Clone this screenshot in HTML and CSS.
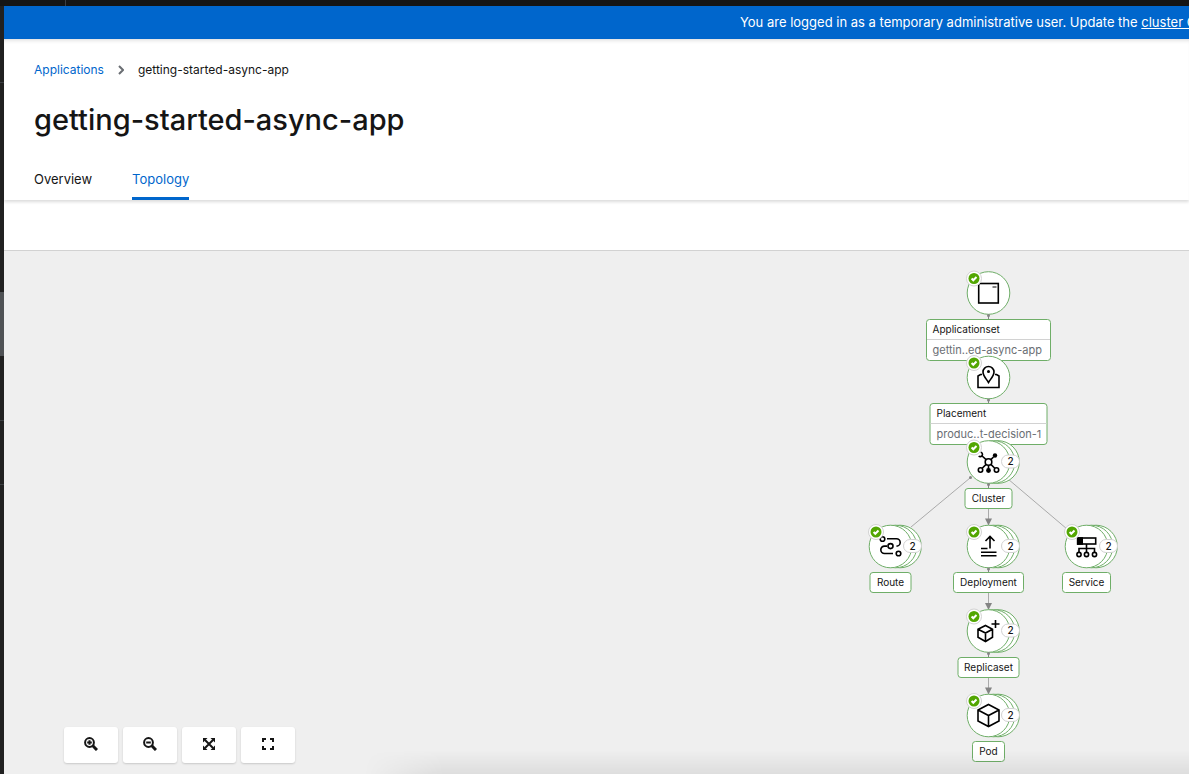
FILE: index.html
```
<!DOCTYPE html>
<html lang="en">
<head>
<meta charset="utf-8">
<title>getting-started-async-app</title>
<link rel="stylesheet" href="styles.css">
</head>
<body>
<header class="masthead"><span class="masthead-toggle"></span></header>
<div class="shell">
  <aside class="sidebar">
    <span class="nav-item nav-first"></span>
    <span class="nav-item nav-group"></span>
    <span class="nav-item nav-current"></span>
    <span class="nav-item"></span>
    <span class="nav-item"></span>
    <span class="nav-item nav-rest"></span>
  </aside>
  <main class="main">
    <div class="banner"><p class="banner-text">You are logged in as a temporary administrative user. Update the <a href="#">cluster OAuth configuration</a></p></div>
    <section class="page-header">
      <nav class="breadcrumb" aria-label="Breadcrumb">
        <a href="#">Applications</a>
        <svg class="chevron" width="6" height="10" viewBox="0 0 6 10" aria-hidden="true"><path d="M1 1l4 4-4 4"/></svg>
        <span>getting-started-async-app</span>
      </nav>
      <h1 class="title">getting-started-async-app</h1>
      <nav class="tabs" aria-label="Views">
        <a class="tab" href="#">Overview</a>
        <a class="tab tab-active" href="#" aria-current="page">Topology</a>
      </nav>
    </section>
    <div class="toolbar"></div>
    <section class="canvas">
      <svg class="graph" role="img" aria-label="Application topology">
        <defs>
          <g id="check"><circle class="badge-ring" r="7.5"/><circle class="badge-fill" r="5.5"/><path class="badge-tick" d="M-2.4 0l1.7 1.8L2.5-1.5"/></g>
          <g id="single"><circle class="disc" r="21.3"/></g>
          <g id="stack"><circle class="disc" cx="9.5" r="21.3"/><circle class="disc" cx="5" r="21.3"/><circle class="disc" r="21.3"/></g>
          <g id="pill"><rect class="pill" x="13" y="-7" width="18" height="13" rx="6.5"/></g>
          <g id="arrow"><path class="arrow" d="M-3.5-6h7L0 1z"/></g>
          <g id="port"><circle class="port" cy="22.500" r="1.500"/><path class="stem" d="M0 22v4"/></g>
        </defs>

        <g class="edges">
          <path d="M966 227L907 276"/>
          <path d="M1004 228L1063 278"/>
          <path d="M984.5 234v39M984.5 318v39M984.5 403v39"/>
        </g>

        <g transform="translate(984.5 42)">
          <use href="#single"/><use href="#port"/>
          <g class="icon"><rect x="-9.8" y="-9.5" width="19.6" height="19.500"/><path class="thin" d="M4-6h4"/></g>
          <use href="#check" x="-14.500" y="-14.5"/>
          <rect class="label" x="-62" y="26.500" width="124" height="41" rx="3"/><path class="rule" d="M-61.500 46.500h123"/>
          <text class="kind" x="-56" y="40">Applicationset</text>
          <text class="name" x="-56" y="61">gettin..ed-async-app</text>
        </g>

        <g transform="translate(984.5 126.500)">
          <use href="#single"/><use href="#port"/>
          <g class="icon"><path d="M0 5C-2 1.500-5.500-1.500-5.500-5.500a5.500 5.500 0 0 1 11 0C5.500-1.500 2 1.500 0 5z"/><circle class="dot" cy="-6" r="1.500"/><path d="M-6.500-3h-1.500l-2.500 1.500V10h21V-1.500L8-3H6.500"/></g>
          <use href="#check" x="-14.500" y="-14.500"/>
          <rect class="label" x="-58.500" y="26" width="117" height="41" rx="3"/><path class="rule" d="M-58 46h116"/>
          <text class="kind" x="-52" y="39">Placement</text>
          <text class="name" x="-52" y="60">produc..t-decision-1</text>
        </g>

        <g transform="translate(984.5 211)">
          <use href="#stack"/><use href="#port"/><circle class="port" cx="-18" cy="15.500" r="1.500"/>
          <g class="icon"><circle r="3.300"/><path d="M-9.800-6a2.200 2.200 0 1 0 2-3.700"/><circle class="dot" cx="6.500" cy="-6.500" r="2.200"/><circle cx="-8" cy="8" r="2.200"/><circle cx="8" cy="8" r="2.200"/><circle class="dot" cy="8.500" r="2.400"/><path d="M-6.400-6l4 3.600M5-5L2.400-2.400M-6.300 6.200l3.900-3.800M6.300 6.200L2.400 2.400M0 3.300v4"/></g>
          <use href="#pill"/><text class="count" x="22" y="3">2</text><use href="#check" x="-14.500" y="-14.500"/>
          <rect class="label" x="-23.500" y="26.500" width="47" height="20" rx="3"/><text class="caption" x="0" y="40">Cluster</text>
        </g>

        <g transform="translate(886.5 295.500)">
          <use href="#stack"/>
          <g class="icon"><circle cx="-8" cy="-7.500" r="2.300"/><path d="M-3.500-7.800H6a3.700 3.700 0 0 1 0 7.400M-3.500-.4H-6a3.700 3.700 0 0 0 0 7.400h8.500"/><circle cx="0" cy="-.4" r="2.500"/><circle cx="8" cy="7" r="2.300"/></g>
          <use href="#pill"/><text class="count" x="22" y="3">2</text><use href="#check" x="-14.500" y="-14.500"/>
          <rect class="label" x="-20.500" y="26" width="41" height="20" rx="3"/><text class="caption" x="0" y="39">Route</text>
        </g>

        <g transform="translate(984.5 295.500)">
          <use href="#arrow" y="-22"/><use href="#stack"/><use href="#port"/>
          <g class="icon"><path d="M1.500 2V-10M-3-5.500l4.500-4.500L6-5.500M-7.500 2h6.500M-7.500 5.800H8M-7.500 9.200H8"/></g>
          <use href="#pill"/><text class="count" x="22" y="3">2</text><use href="#check" x="-14.500" y="-14.500"/>
          <rect class="label" x="-35" y="26" width="70" height="20" rx="3"/><text class="caption" x="0" y="39">Deployment</text>
        </g>

        <g transform="translate(1082.5 295.500)">
          <use href="#stack"/>
          <g class="icon"><rect x="-8.800" y="-8.500" width="18" height="6"/><rect class="solid" x="-8.800" y="-8.500" width="4.500" height="6"/><path d="M0-2.500V6M-7.500 6V2H8v4"/><circle cx="-7.500" cy="8" r="2.100"/><circle cx="0" cy="8" r="2.100"/><circle cx="8" cy="8" r="2.100"/></g>
          <use href="#pill"/><text class="count" x="22" y="3">2</text><use href="#check" x="-14.500" y="-14.500"/>
          <rect class="label" x="-24" y="26" width="48" height="20" rx="3"/><text class="caption" x="0" y="39">Service</text>
        </g>

        <g transform="translate(984.5 380)">
          <use href="#arrow" y="-22"/><use href="#stack"/><use href="#port"/>
          <g class="icon"><path d="M-3-5.500l7 3.700v8L-3 10.500l-7.500-4.300v-8zM-10.500-1.800L-3 2l7-3.800M-3 2v8.500M3-7h8M7-11v8"/></g>
          <use href="#pill"/><text class="count" x="22" y="3">2</text><use href="#check" x="-14.500" y="-14.500"/>
          <rect class="label" x="-30.500" y="26.500" width="61" height="20" rx="3"/><text class="caption" x="0" y="40">Replicaset</text>
        </g>

        <g transform="translate(984.5 464.500)">
          <use href="#arrow" y="-22"/><use href="#stack"/>
          <g class="icon"><path d="M0-11l10.500 5.500V5.500L0 11l-10.500-5.500v-11zM-10.500-5.500L0 0l10.500-5.500M0 0v11"/></g>
          <use href="#pill"/><text class="count" x="22" y="3">2</text><use href="#check" x="-14.500" y="-14.500"/>
          <rect class="label" x="-16" y="26" width="32" height="20" rx="3"/><text class="caption" x="0" y="39">Pod</text>
        </g>
      </svg>
      <div class="controls">
        <button class="control" type="button" aria-label="Zoom in"><svg width="14" height="14" viewBox="0 0 14 14"><circle cx="5.500" cy="5.500" r="4.400"/><path d="M3.200 5.500h4.600M5.500 3.200v4.600"/><path class="handle" d="M8.800 8.800l4.200 4.200"/></svg></button>
        <button class="control" type="button" aria-label="Zoom out"><svg width="14" height="14" viewBox="0 0 14 14"><circle cx="5.500" cy="5.500" r="4.400"/><path d="M3.200 5.500h4.600"/><path class="handle" d="M8.800 8.800l4.200 4.200"/></svg></button>
        <button class="control" type="button" aria-label="Fit to screen"><svg width="14" height="14" viewBox="0 0 14 14"><path d="M3 3l8 8M11 3l-8 8"/><path class="tip" d="M1 1h4.500L1 5.500zM13 1v4.500L8.500 1zM1 13V8.500L5.500 13zM13 13H8.500L13 8.500z"/></svg></button>
        <button class="control" type="button" aria-label="Reset view"><svg width="14" height="14" viewBox="0 0 14 14"><path d="M2 5V2h3M9 2h3v3M12 9v3H9M5 12H2V9"/></svg></button>
      </div>
      <div class="drawer-shade"></div>
    </section>
  </main>
</div>
</body>
</html>
```
FILE: styles.css
```
* { box-sizing: border-box; }

body {
  margin: 0;
  height: 100vh;
  display: flex;
  flex-direction: column;
  overflow: hidden;
  color: #151515;
  background: #fff;
  font-family: "Inter", "Noto Sans", sans-serif;
  font-size: 12px;
}

a { color: #06c; text-decoration: none; }

.masthead { flex: none; height: 6px; background: #151515; }
.masthead-toggle { display: block; width: 66px; height: 6px; border-right: 1px solid #3c3f42; }

.shell { flex: 1; min-height: 0; display: flex; }

.sidebar { flex: none; width: 4px; display: flex; flex-direction: column; background: #212121; }
.nav-item { height: 64px; border-bottom: 1px solid #3c3f42; }
.nav-first { height: 77px; }
.nav-group { height: 209px; border-bottom: 0; }
.nav-current { background: #4f5255; border-bottom: 0; }
.nav-current + .nav-item { height: 65px; }
.nav-rest { flex: 1; border-bottom: 0; }

.main { flex: 1; min-width: 0; display: flex; flex-direction: column; }

.banner {
  flex: none;
  height: 33px;
  padding-left: 736px;
  overflow: hidden;
  color: #fff;
  background: #06c;
  font-size: 13px;
  line-height: 33px;
}
.banner-text { margin: 0; white-space: nowrap; }
.banner a { color: inherit; text-decoration: underline; }

.page-header {
  position: relative;
  flex: none;
  padding: 21px 30px 0;
  box-shadow: inset 0 4px 4px -3px rgba(3, 3, 3, .16), 0 2px 3px rgba(3, 3, 3, .14);
}

.breadcrumb { display: flex; align-items: center; line-height: 20px; }
.chevron { margin: 0 14px; fill: none; stroke: #6a6e73; stroke-width: 2; }

.title { margin: 20px 0 0; font-size: 29px; font-weight: 500; line-height: 40px; }

.tabs { display: flex; gap: 40px; margin-top: 19px; font-size: 13px; }
.tab { height: 41px; color: #151515; line-height: 40px; border-bottom: 3px solid transparent; }
.tab-active { color: #06c; border-color: #06c; }

.toolbar { flex: none; height: 51px; border-bottom: 1px solid #d2d2d2; }

.canvas { position: relative; flex: 1; min-height: 0; display: flex; align-items: flex-end; background: #efefef; }

.graph { position: absolute; top: 0; left: 0; width: 100%; height: 100%; }
.edges { fill: none; stroke: #aaa; stroke-width: 1; }
.arrow, .port { fill: #848484; }
.stem { stroke: #848484; stroke-width: 1; }
.disc { fill: #fff; stroke: #6fae68; stroke-width: 1; }
.badge-ring { fill: #fff; stroke: #d2d2d2; stroke-width: 1; }
.badge-fill { fill: #52a602; }
.badge-tick { fill: none; stroke: #fff; stroke-width: 2; }
.pill { fill: #fff; stroke: #d2d2d2; stroke-width: 1; }
.label { fill: #fff; stroke: #6fae68; stroke-width: 1; }
.rule { stroke: #d2d2d2; }
.icon { fill: none; stroke: #000; stroke-width: 1.6; }
.icon .solid { fill: #000; }
.icon .dot { fill: #000; stroke: none; }
.icon .thin { stroke-width: 1; }
.kind, .caption, .count { fill: #151515; font-size: 10px; }
.caption, .count { text-anchor: middle; }
.count { font-weight: 500; }
.name { fill: #6a6e73; font-size: 11px; }

.controls { position: relative; display: flex; gap: 5px; padding: 0 0 11px 60px; }
.control {
  display: flex;
  align-items: center;
  justify-content: center;
  width: 54px;
  height: 36px;
  padding: 0 0 2px;
  border: 0;
  border-radius: 3px;
  background: #fff;
  box-shadow: 0 1px 2px rgba(3, 3, 3, .16);
}
.control svg { fill: none; stroke: #151515; stroke-width: 2; }
.control .handle { stroke-width: 3; }
.control .tip { fill: #151515; stroke: none; }

.drawer-shade {
  position: absolute;
  right: 0;
  bottom: 0;
  left: 360px;
  height: 24px;
  background: linear-gradient(to top, rgba(0, 0, 0, .07), transparent);
  -webkit-mask-image: linear-gradient(to right, transparent, #000 80px);
  mask-image: linear-gradient(to right, transparent, #000 80px);
}
```
